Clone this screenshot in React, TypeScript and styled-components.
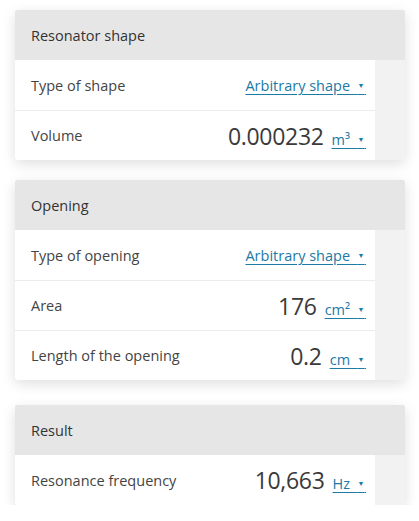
import React from "react";
import styled, { createGlobalStyle } from "styled-components";

interface Field {
  label: string;
  value?: string;
  unit: string;
}

interface Section {
  title: string;
  fields: Field[];
}

const sections: Section[] = [
  {
    title: "Resonator shape",
    fields: [
      { label: "Type of shape", unit: "Arbitrary shape" },
      { label: "Volume", value: "0.000232", unit: "m³" },
    ],
  },
  {
    title: "Opening",
    fields: [
      { label: "Type of opening", unit: "Arbitrary shape" },
      { label: "Area", value: "176", unit: "cm²" },
      { label: "Length of the opening", value: "0.2", unit: "cm" },
    ],
  },
  {
    title: "Result",
    fields: [{ label: "Resonance frequency", value: "10,663", unit: "Hz" }],
  },
];

const App: React.FC = () => {
  return (
    <>
      <GlobalStyle />
      <Page>
        {sections.map((section) => (
          <Card key={section.title}>
            <CardHeader>{section.title}</CardHeader>
            <Rows>
              {section.fields.map((field) => (
                <Row key={field.label}>
                  <Label>{field.label}</Label>
                  <ValueGroup>
                    {field.value && <Value>{field.value}</Value>}
                    <UnitLink href="#">
                      {field.unit}
                      {"\u00a0\u00a0"}
                      <Caret>▼</Caret>
                      {"\u200a"}
                    </UnitLink>
                  </ValueGroup>
                </Row>
              ))}
            </Rows>
          </Card>
        ))}
      </Page>
    </>
  );
};

export default App;

const GlobalStyle = createGlobalStyle`
  body {
    margin: 0;
    background: #ffffff;
    font-family: "Open Sans", "Noto Sans", sans-serif;
  }
`;

const Page = styled.div`
  display: flex;
  flex-direction: column;
  gap: 20px;
  padding: 10px 14px 0 15px;

  & > section:last-child {
    margin-top: 5px;
  }
`;

const Card = styled.section`
  background: #f2f2f2;
  border-radius: 3px;
  overflow: hidden;
  box-shadow: 0 4px 14px rgba(0, 0, 0, 0.13);
`;

const CardHeader = styled.div`
  height: 50px;
  display: flex;
  align-items: center;
  padding-left: 16px;
  background: #e6e6e6;
  color: #333333;
  font-size: 14.5px;
`;

const Rows = styled.div`
  margin-right: 30px;
  background: #ffffff;
`;

const Row = styled.div`
  height: 50px;
  display: flex;
  align-items: center;
  justify-content: space-between;
  padding: 0 9px 0 16px;
  box-sizing: border-box;

  & + & {
    border-top: 1px solid #ececec;
  }
`;

const Label = styled.span`
  color: #444444;
  font-size: 14.5px;
`;

const ValueGroup = styled.div`
  display: flex;
  align-items: baseline;
  gap: 8px;
`;

const Value = styled.span`
  color: #3a3a3a;
  font-size: 23px;
  letter-spacing: -0.3px;
`;

const UnitLink = styled.a`
  color: #1b7aa6;
  font-size: 14.5px;
  text-decoration: underline;
  text-underline-offset: 3px;
`;

const Caret = styled.span`
  font-size: 7px;
  vertical-align: 3px;
`;
